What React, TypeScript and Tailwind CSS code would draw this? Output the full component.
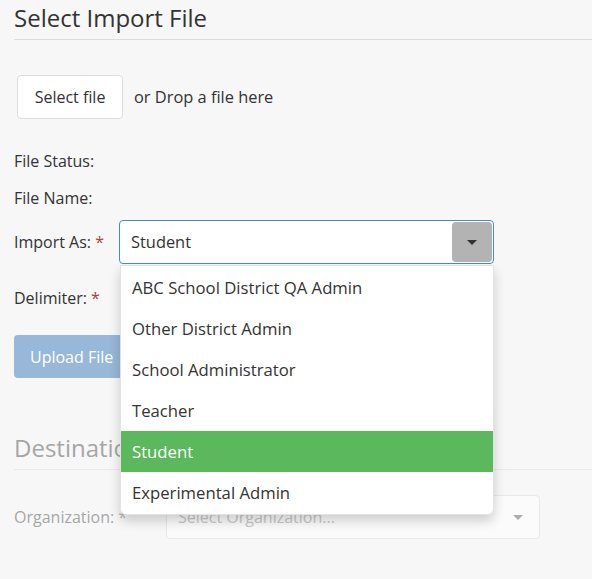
const roles = [
  'ABC School District QA Admin',
  'Other District Admin',
  'School Administrator',
  'Teacher',
  'Student',
  'Experimental Admin'
];

function Caret({ className }: { className?: string }) {
  return (
    <svg width="10" height="5" viewBox="0 0 10 5" className={className}>
      <path d="M0 0 L10 0 L5 5 Z" fill="currentColor" />
    </svg>
  );
}

export default function App() {
  const selected = 'Student';
  return (
    <div
      className="min-h-[579px] w-[592px] overflow-hidden bg-[#f7f7f7] pl-[14px] text-[16px] text-[#333]"
      style={{ fontFamily: '"Open Sans", sans-serif' }}
    >
      <h2 className="flex h-[40px] items-center border-b border-[#dddddd] pb-[4px] text-[24px] font-normal">
        Select Import File
      </h2>

      <div className="mt-[35px] flex items-center">
        <button className="ml-[3px] h-[44px] w-[106px] rounded-[4px] border border-[#dddddd] bg-white text-[#333]">
          Select file
        </button>
        <span className="ml-[11px] text-[16.4px]">or Drop a file here</span>
      </div>

      <div className="mt-[23px] flex h-[37px] items-center">File Status:</div>
      <div className="flex h-[37px] items-center">File Name:</div>

      <div className="mt-[4px] flex items-center">
        <label className="w-[105px]">
          Import As: <span className="text-[#a94442]">*</span>
        </label>
        <div className="relative z-10 w-[375px]">
          <div className="flex h-[44px] items-center rounded-[4px] border border-[#4a8ac7] bg-white pl-[11px] pr-[1px]">
            <span className="flex-1 text-[16.4px]">{selected}</span>
            <span className="flex h-[40px] w-[40px] items-center justify-center rounded-[4px] bg-[#b3b3b3] text-[#333]">
              <Caret />
            </span>
          </div>
          <ul className="absolute left-[1px] right-0 top-[45px] rounded-b-[6px] border border-[#e3e3e3] bg-white py-px text-[16.7px] shadow-[0_6px_12px_rgba(0,0,0,0.18)]">
            {roles.map((r) => (
              <li
                key={r}
                className={
                  r === selected
                    ? 'flex h-[41px] items-center bg-[#5cb85c] pl-[11px] text-white'
                    : 'flex h-[41px] items-center pl-[11px] text-[#333]'
                }
              >
                {r}
              </li>
            ))}
          </ul>
        </div>
      </div>

      <div className="mt-[12px] flex h-[44px] items-center">
        <label className="w-[105px]">
          Delimiter: <span className="text-[#a94442]">*</span>
        </label>
      </div>

      <button className="mt-[15px] h-[43px] rounded-[4px] bg-[#97b8d8] px-[16px] text-white">
        Upload File
      </button>

      <div className="opacity-50">
        <h2 className="mt-[52px] flex h-[40px] items-center border-b border-[#dddddd] pb-[4px] text-[24px] font-normal text-[#555]">
          Destination
        </h2>
        <div className="mt-[25px] flex items-center">
          <label className="w-[152px] text-[#555]">
            Organization: <span className="text-[#777]">*</span>
          </label>
          <div className="flex h-[44px] w-[374px] items-center rounded-[4px] border border-[#dddddd] bg-white pl-[11px] pr-[16px]">
            <span className="flex-1 text-[#999]">Select Organization...</span>
            <Caret className="text-[#666]" />
          </div>
        </div>
      </div>
    </div>
  );
}
